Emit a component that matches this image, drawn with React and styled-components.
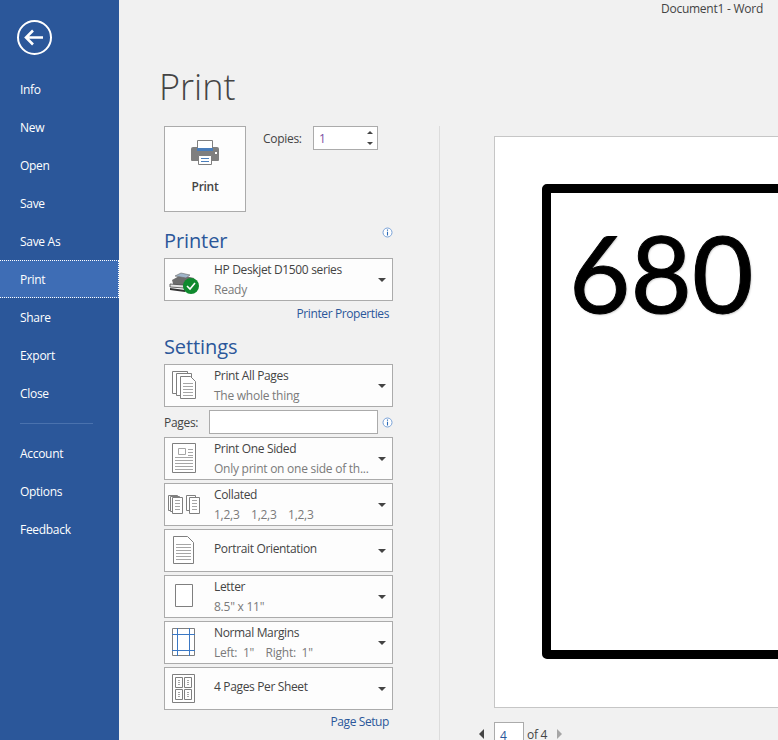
import React from 'react';
import styled, { createGlobalStyle } from 'styled-components';

const Global = createGlobalStyle`
	html, body {
		margin: 0;
		padding: 0;
		background: #f1f1f1;
	}
	* {
		box-sizing: border-box;
	}
`
const Window = styled.div`
	display: flex;
	width: 778px;
	height: 740px;
	overflow: hidden;
	font-family: "Open Sans", "Liberation Sans", sans-serif;
	font-size: 12px;
	color: #444;
	background: #f1f1f1;
`
const Sidebar = styled.nav`
	display: flex;
	flex-direction: column;
	flex-shrink: 0;
	width: 119px;
	height: 100%;
	padding-top: 20px;
	background: #2b579a;
`
const BackButton = styled.div`
	display: flex;
	width: 36px;
	height: 36px;
	margin: 0 0 14px 17px;
`
const NavItem = styled.div`
	display: flex;
	align-items: center;
	height: 38px;
	padding-left: 20px;
	color: #fff;
	font-size: 12px;
	letter-spacing: -0.3px;
	${props => props.active && `
		background: #3e6db5;
		border-top: 1px dotted #fff;
		border-bottom: 1px dotted #fff;
		border-right: 1px dotted #fff;
	`}
`
const NavRule = styled.div`
	width: 73px;
	height: 1px;
	margin: 11px 0 10px 20px;
	background: #4a72ae;
`
const Main = styled.main`
	position: relative;
	display: flex;
	flex-direction: column;
	flex: 1;
	min-width: 0;
	padding-left: 45px;
`
const TitleBar = styled.div`
	position: absolute;
	top: 0;
	right: 15px;
	height: 17px;
	line-height: 17px;
	font-size: 12px;
	letter-spacing: -0.25px;
	color: #444;
`
const Title = styled.h1`
	height: 126px;
	margin: 0 0 0 -5px;
	padding-top: 60px;
	font-size: 36px;
	line-height: 54px;
	font-weight: 300;
	color: #444;
`
const Columns = styled.div`
	display: flex;
	flex: 1;
	min-height: 0;
`
const Options = styled.section`
	display: flex;
	flex-direction: column;
	flex-shrink: 0;
	width: 229px;
`
const PrintRow = styled.div`
	display: flex;
	height: 86px;
`
const PrintButton = styled.div`
	display: flex;
	flex-direction: column;
	align-items: center;
	width: 82px;
	height: 86px;
	padding-top: 13px;
	background: #fdfdfd;
	border: 1px solid #ababab;
	font-size: 12px;
	font-weight: 600;
	letter-spacing: -0.3px;
	color: #444;
	span {
		margin-top: 12px;
	}
`
const Copies = styled.div`
	display: flex;
	align-items: flex-start;
	margin-left: 17px;
	height: 24px;
	label {
		width: 50px;
		line-height: 24px;
		letter-spacing: -0.3px;
		margin-top: 1px;
	}
`
const Spinner = styled.div`
	display: flex;
	align-items: center;
	justify-content: space-between;
	width: 65px;
	height: 24px;
	padding: 0 4px 0 5px;
	background: #fff;
	border: 1px solid #ababab;
	color: #7b4fa3;
`
const SpinArrows = styled.div`
	display: flex;
	flex-direction: column;
	gap: 8px;
`
const Arrow = styled.i`
	display: block;
	width: 0;
	height: 0;
	border-left: 3px solid transparent;
	border-right: 3px solid transparent;
	${props => props.up ? 'border-bottom: 3px solid #444;' : 'border-top: 3px solid #444;'}
`
const SectionHead = styled.div`
	position: relative;
	height: ${props => props.height}px;
	padding-top: ${props => props.top}px;
	font-size: 20px;
	line-height: 28px;
	color: #2b579a;
	letter-spacing: -0.1px;
`
const InfoMark = styled.svg`
	position: absolute;
	right: 0;
	top: 15px;
`
const Dropdown = styled.div`
	display: flex;
	align-items: center;
	flex-shrink: 0;
	width: 229px;
	height: 43px;
	margin-bottom: 3px;
	background: #fdfdfd;
	border: 1px solid #ababab;
`
const DropIcon = styled.svg`
	flex-shrink: 0;
	width: 49px;
	height: 41px;
`
const DropText = styled.div`
	display: flex;
	flex-direction: column;
	flex: 1;
	min-width: 0;
	gap: 3px;
	padding-bottom: ${props => props.single ? 4 : 0}px;
	line-height: 17px;
	letter-spacing: -0.35px;
	color: #444;
	small {
		font-size: 12px;
		letter-spacing: -0.25px;
		color: #7a7a7a;
		white-space: pre;
	}
`
const Caret = styled.i`
	flex-shrink: 0;
	width: 0;
	height: 0;
	margin: 1px 6px 0 0;
	border-left: 4px solid transparent;
	border-right: 4px solid transparent;
	border-top: 4px solid #444;
`
const LinkRow = styled.div`
	height: 22px;
	margin-top: ${props => props.lift || 0}px;
	padding-right: 4px;
	text-align: right;
	line-height: 20px;
	letter-spacing: -0.4px;
	color: #2b579a;
`
const PagesRow = styled.div`
	position: relative;
	display: flex;
	align-items: center;
	justify-content: space-between;
	width: 214px;
	height: 24px;
	margin-bottom: 3px;
	letter-spacing: -0.3px;
	div {
		width: 169px;
		height: 24px;
		background: #fff;
		border: 1px solid #ababab;
	}
`
const PagesInfo = styled.svg`
	position: absolute;
	right: -15px;
	top: 7px;
`
const Preview = styled.section`
	display: flex;
	flex-direction: column;
	flex: 1;
	min-width: 0;
	margin-left: 46px;
	padding: 10px 0 0 54px;
	border-left: 1px solid #dcdcdc;
`
const Sheet = styled.div`
	flex-shrink: 0;
	width: 400px;
	height: 572px;
	padding: 47px 0 0 47px;
	background: #fff;
	border: 1px solid #c6c6c6;
`
const Frame = styled.div`
	width: 400px;
	height: 475px;
	padding: 13px 0 0 18px;
	border: 9px solid #000;
	border-radius: 5px;
	font-family: Lato, "Open Sans", sans-serif;
	font-size: 106px;
	line-height: 132px;
	color: #000;
	-webkit-text-stroke: 1px #000;
	text-shadow: 1px 1px 2px rgba(0, 0, 0, 0.25);
`
const Pager = styled.div`
	position: relative;
	display: flex;
	align-items: flex-start;
	margin-top: 14px;
	height: 30px;
`
const PagerBack = styled.i`
	position: absolute;
	left: -15px;
	top: 7px;
	width: 0;
	height: 0;
	border-top: 5px solid transparent;
	border-bottom: 5px solid transparent;
	border-right: 5px solid #444;
`
const PagerNext = styled.i`
	width: 0;
	height: 0;
	margin: 7px 0 0 10px;
	border-top: 5px solid transparent;
	border-bottom: 5px solid transparent;
	border-left: 5px solid #a6a6a6;
`
const PageBox = styled.div`
	width: 30px;
	height: 30px;
	padding: 4px 0 0 5px;
	background: #fff;
	border: 1px solid #ababab;
	color: #2b579a;
`
const PageOf = styled.span`
	margin: 4px 0 0 3px;
	letter-spacing: -0.25px;
`

const GREY = '#7f7f7f';
const LINE = '#a6a6a6';

// a page outline with optional text lines, coordinates are pixels inside the dropdown
const Page = ({ x, y, w, h, ear, lines = [] }) => (
	<g>
		<path
			d={ear
				? `M${x + .5} ${y + .5}H${x + w - ear - .5}L${x + w - .5} ${y + ear + .5}V${y + h - .5}H${x + .5}Z`
				: `M${x + .5} ${y + .5}H${x + w - .5}V${y + h - .5}H${x + .5}Z`}
			fill="#fff" stroke={GREY}
		/>
		{lines.map((ly, i) => (
			<path key={i} d={`M${x + 3} ${ly + .5}H${x + w - 3}`} stroke={LINE} />
		))}
	</g>
)

const InfoIcon = () => (
	<>
		<circle cx="5.5" cy="5.5" r="4.5" fill="#fff" stroke="#7aa3d8" />
		<path d="M5.5 2.6v1.2M5.5 4.8v3.6" stroke="#2b6cb8" strokeWidth="1.1" />
	</>
)

const icons = {
	printer: (
		<>
			<path d="M7 21l9-5 13 3-2 8-18 1z" fill="#6d6d6d" />
			<path d="M10 17l6-3 9 2-4 3z" fill="#9fb4c8" stroke="#666" strokeWidth=".6" />
			<path d="M5 25l14 1v3l-14-1z" fill="#e6e6e6" stroke="#444" strokeWidth=".8" />
			<path d="M5 29l15 2v2l-15-2z" fill="#333" />
			<circle cx="26" cy="27" r="8" fill="#0f8a2e" />
			<path d="M22 27l3 3 5-6" fill="none" stroke="#fff" strokeWidth="1.6" />
		</>
	),
	allPages: (
		<>
			<Page x={7} y={6} w={16} h={23} />
			<Page x={11} y={8} w={16} h={23} />
			<Page x={15} y={11} w={16} h={23} ear={5} lines={[18, 21, 24, 27, 30]} />
		</>
	),
	oneSided: (
		<>
			<Page x={7} y={5} w={24} h={30} lines={[19, 22, 25, 28, 31]} />
			<path d="M13.5 10.5h7v6h-7z" fill="#fff" stroke={LINE} />
			<path d="M23 11.5h5M23 14.5h5M23 17.5h5" stroke={LINE} />
		</>
	),
	collated: (
		<>
			<Page x={3} y={11} w={10} h={16} />
			<Page x={5} y={12} w={10} h={16} />
			<Page x={7} y={13} w={11} h={17} lines={[16, 19, 22, 25]} />
			<Page x={21} y={11} w={10} h={16} />
			<Page x={24} y={13} w={11} h={17} lines={[16, 19, 22, 25]} />
		</>
	),
	portrait: <Page x={8} y={6} w={21} h={28} ear={6} lines={[14, 17, 20, 23, 26, 29]} />,
	letter: <Page x={10} y={8} w={18} h={23} />,
	margins: (
		<>
			<Page x={7} y={6} w={23} h={28} />
			<path d="M12.5 6v28M24.5 6v28M7 12.5h23M7 28.5h23" stroke="#3b78c4" fill="none" />
		</>
	),
	fourPages: (
		<>
			<Page x={7} y={6} w={23} h={29} />
			<Page x={10} y={9} w={8} h={11} lines={[12, 14, 16]} />
			<Page x={19} y={9} w={8} h={11} lines={[12, 14, 16]} />
			<Page x={10} y={21} w={8} h={11} lines={[24, 26, 28]} />
			<Page x={19} y={21} w={8} h={11} lines={[24, 26, 28]} />
		</>
	),
}

const Select = ({ icon, title, sub }) => (
	<Dropdown>
		<DropIcon viewBox="0 0 49 41">{icons[icon]}</DropIcon>
		<DropText single={!sub}>
			<span>{title}</span>
			{sub && <small>{sub}</small>}
		</DropText>
		<Caret />
	</Dropdown>
)

const topNav = ['Info', 'New', 'Open', 'Save', 'Save As', 'Print', 'Share', 'Export', 'Close'];
const bottomNav = ['Account', 'Options', 'Feedback'];

const App = () => (
	<Window>
		<Global />
		<Sidebar>
			<BackButton>
				<svg width="36" height="36" viewBox="0 0 36 36" fill="none" stroke="#fff">
					<circle cx="17.5" cy="17.5" r="16.5" strokeWidth="2" />
					<path d="M9 17.5h17M16 10.5l-7 7 7 7" strokeWidth="2.6" />
				</svg>
			</BackButton>
			{topNav.map(item => <NavItem key={item} active={item === 'Print'}>{item}</NavItem>)}
			<NavRule />
			{bottomNav.map(item => <NavItem key={item}>{item}</NavItem>)}
		</Sidebar>
		<Main>
			<TitleBar>Document1 - Word</TitleBar>
			<Title>Print</Title>
			<Columns>
				<Options>
					<PrintRow>
						<PrintButton>
							<svg width="30" height="26" viewBox="0 0 30 26">
								<path d="M1 9a2 2 0 0 1 2-2h24a2 2 0 0 1 2 2v11a1 1 0 0 1-1 1H2a1 1 0 0 1-1-1z" fill="#7f7f7f" />
								<path d="M7.5 .5h15v8h-15z" fill="#fff" stroke="#7f7f7f" />
								<path d="M7 8h16v3H7z" fill="#4a7ebb" />
								<path d="M8.5 15.5h13v9h-13z" fill="#fff" stroke="#7f7f7f" />
								<path d="M11 18.5h8M11 21.5h8" stroke="#4a7ebb" />
								<path d="M25 12h2v2h-2z" fill="#fff" />
							</svg>
							<span>Print</span>
						</PrintButton>
						<Copies>
							<label>Copies:</label>
							<Spinner>
								<span>1</span>
								<SpinArrows>
									<Arrow up />
									<Arrow />
								</SpinArrows>
							</Spinner>
						</Copies>
					</PrintRow>
					<SectionHead top={15} height={46}>
						Printer
						<InfoMark width="11" height="11" viewBox="0 0 11 11"><InfoIcon /></InfoMark>
					</SectionHead>
					<Select icon="printer" title="HP Deskjet D1500 series" sub="Ready" />
					<LinkRow>Printer Properties</LinkRow>
					<SectionHead top={7} height={38}>Settings</SectionHead>
					<Select icon="allPages" title="Print All Pages" sub="The whole thing" />
					<PagesRow>
						<span>Pages:</span>
						<div />
						<PagesInfo width="11" height="11" viewBox="0 0 11 11"><InfoIcon /></PagesInfo>
					</PagesRow>
					<Select icon="oneSided" title="Print One Sided" sub="Only print on one side of th..." />
					<Select icon="collated" title="Collated" sub="1,2,3    1,2,3    1,2,3" />
					<Select icon="portrait" title="Portrait Orientation" />
					<Select icon="letter" title="Letter" sub={'8.5" x 11"'} />
					<Select icon="margins" title="Normal Margins" sub={'Left:  1"    Right:  1"'} />
					<Select icon="fourPages" title="4 Pages Per Sheet" />
					<LinkRow lift={-1}>Page Setup</LinkRow>
				</Options>
				<Preview>
					<Sheet>
						<Frame>680</Frame>
					</Sheet>
					<Pager>
						<PagerBack />
						<PageBox>4</PageBox>
						<PageOf>of 4</PageOf>
						<PagerNext />
					</Pager>
				</Preview>
			</Columns>
		</Main>
	</Window>
)

export default App;
